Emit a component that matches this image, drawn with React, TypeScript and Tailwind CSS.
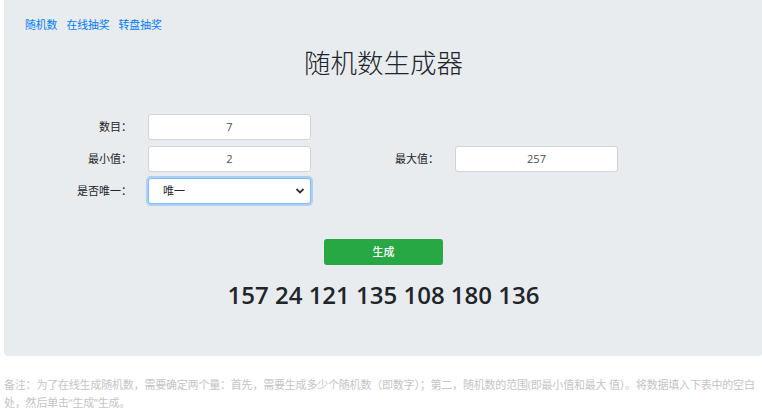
import React from 'react';

const font = { fontFamily: '"Open Sans", "Noto Sans CJK SC", sans-serif' };

const numbers = [157, 24, 121, 135, 108, 180, 136];

function Field({ value }: { value: string }) {
  return (
    <div className="h-[26px] w-[163px] rounded-[3px] border border-[#ced4da] bg-white flex items-center justify-center text-[11px] text-[#495057]">
      {value}
    </div>
  );
}

function Label({ children }: { children: React.ReactNode }) {
  return (
    <div className="w-[128px] h-[26px] flex items-center justify-end text-[11px] text-[#212529]">
      {children}
    </div>
  );
}

export default function App() {
  return (
    <div className="w-[762px] h-[417px] overflow-hidden bg-white" style={font}>
      {/* Jumbotron */}
      <div className="ml-[4px] w-[759px] bg-[#e9ecef] rounded-b-[4px] pt-[17px] pb-[45px]">
        <nav className="pl-[21px] flex gap-[9px] text-[10.8px] leading-[15px] text-[#007bff]">
          <a>随机数</a>
          <a>在线抽奖</a>
          <a>转盘抽奖</a>
        </nav>

        <h1 className="mt-[13px] text-center text-[26.5px] leading-[36px] font-light text-[#212529]">
          随机数生成器
        </h1>

        {/* Form */}
        <div className="mt-[33px] flex flex-col gap-[6px]">
          <div className="flex">
            <Label>数目：</Label>
            <div className="ml-[16px]">
              <Field value="7" />
            </div>
          </div>
          <div className="flex">
            <Label>最小值：</Label>
            <div className="ml-[16px]">
              <Field value="2" />
            </div>
            <Label>最大值：</Label>
            <div className="ml-[16px]">
              <Field value="257" />
            </div>
          </div>
          <div className="flex">
            <Label>是否唯一：</Label>
            <div className="ml-[16px] relative h-[26px] w-[163px] rounded-[3px] border border-[#80bdff] bg-white shadow-[0_0_0_2px_rgba(0,123,255,0.25)] flex items-center pl-[14px] text-[11px] text-[#212529]">
              唯一
              <svg
                className="absolute right-[5px] top-1/2 -translate-y-1/2"
                width="10"
                height="7"
                viewBox="0 0 10 7"
              >
                <path d="M1.5 1.5 L5 5 L8.5 1.5" fill="none" stroke="#333" strokeWidth="1.8" />
              </svg>
            </div>
          </div>
        </div>

        <div className="mt-[35px] flex justify-center">
          <button className="h-[26px] w-[119px] rounded-[3px] bg-[#28a745] text-white text-[11px] font-medium">
            生成
          </button>
        </div>

        <div className="mt-[14px] text-center text-[24px] leading-[32px] font-semibold text-[#212529]">
          {numbers.join(' ')}
        </div>
      </div>

      {/* Note */}
      <p className="mt-[20px] ml-[4px] w-[756px] text-[11px] leading-[18px] tracking-[-0.2px] text-[#c4c4c4]">
        备注：为了在线生成随机数，需要确定两个量：首先，需要生成多少个随机数（即数字）；第二，随机数的范围(即最小值和最大 值）。将数据填入下表中的空白处，然后单击“生成”生成。
      </p>
    </div>
  );
}
